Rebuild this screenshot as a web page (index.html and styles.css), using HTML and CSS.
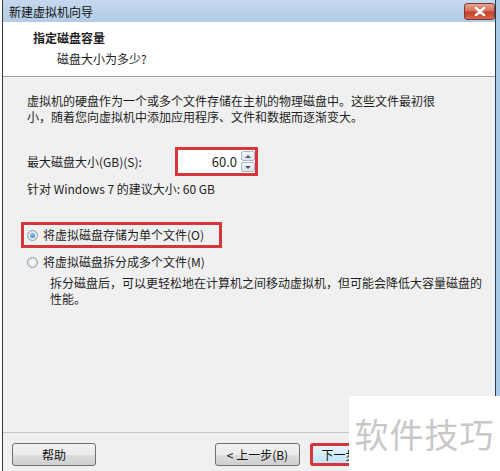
FILE: index.html
```html
<!DOCTYPE html>
<html>
<head>
    <title>新建虚拟机向导</title>
    <link rel="stylesheet" href="styles.css">
</head>
<body>
    <div class="window">
        <div class="titlebar">
            <span class="title">新建虚拟机向导</span>
            <button class="close-btn">
                <svg width="12" height="9" viewBox="0 0 12 9">
                    <path d="M2 1 L10 8 M10 1 L2 8" stroke="#fff" stroke-width="2.4" stroke-linecap="round"/>
                </svg>
            </button>
        </div>
        <div class="header">
            <div class="header-title">指定磁盘容量</div>
            <div class="header-sub">磁盘大小为多少?</div>
        </div>
        <div class="content">
            <p class="intro">虚拟机的硬盘作为一个或多个文件存储在主机的物理磁盘中。这些文件最初很<br>小，随着您向虚拟机中添加应用程序、文件和数据而逐渐变大。</p>
            <div class="size-row">
                <label class="size-label">最大磁盘大小(GB)(S):</label>
                <div class="highlight spin-wrap">
                    <div class="spin">
                        <span class="spin-value">60.0</span>
                        <div class="spin-arrows">
                            <span class="arrow up"></span>
                            <span class="arrow down"></span>
                        </div>
                    </div>
                </div>
            </div>
            <p class="hint">针对 Windows 7 的建议大小: 60 GB</p>
            <div class="options">
                <div class="highlight option-box">
                    <label class="option"><span class="radio checked"></span>将虚拟磁盘存储为单个文件(O)</label>
                </div>
                <label class="option plain"><span class="radio"></span>将虚拟磁盘拆分成多个文件(M)</label>
                <p class="option-desc">拆分磁盘后，可以更轻松地在计算机之间移动虚拟机，但可能会降低大容量磁盘的<br>性能。</p>
            </div>
        </div>
        <div class="footer">
            <button class="btn help">帮助</button>
            <div class="nav">
                <button class="btn">&lt; 上一步(B)</button>
                <button class="btn next">下一步(N) &gt;</button>
                <button class="btn">取消</button>
            </div>
        </div>
    </div>
    <div class="watermark">软件技巧</div>
</body>
</html>
```

FILE: styles.css
```css
/* dialog */
body {
    margin: 0;
    width: 500px;
    height: 471px;
    overflow: hidden;
    background: #fff;
    font-family: "Noto Sans CJK SC", "DejaVu Sans", sans-serif;
    font-size: 12px;
    color: #1e1e1e;
    position: relative;
}

.window {
    margin-left: 2px;
    width: 492px;
    height: 471px;
    border-left: 1px solid #3a3a3a;
    border-right: 1px solid #2c3b4a;
    box-shadow: 4px 0 0 #a8cbe9;
    background: #f0f0f0;
    display: flex;
    flex-direction: column;
}

.titlebar {
    height: 22px;
    background: linear-gradient(#c5d8ee, #b3cbe5);
    display: flex;
    align-items: center;
    justify-content: space-between;
    padding: 0 0 0 6px;
}

.title {
    font-size: 12px;
    color: #111;
}

.close-btn {
    width: 31px;
    height: 17px;
    border: 1px solid #7b3a33;
    border-radius: 3px;
    background: linear-gradient(#e8a493 0%, #d7705a 45%, #c2412a 55%, #d7674d 100%);
    display: flex;
    align-items: center;
    justify-content: center;
    padding: 0;
}

.header {
    height: 55px;
    background: #fff;
    border-bottom: 1px solid #a0a0a0;
    padding: 8px 0 0 30px;
    box-sizing: border-box;
}

.header-title {
    font-weight: bold;
    line-height: 16px;
}

.header-sub {
    padding-left: 24px;
    margin-top: 5px;
    line-height: 16px;
}

.content {
    flex: 1;
    padding: 16px 0 0 24px;
}

.intro {
    margin: 0;
    line-height: 16px;
}

.size-row {
    display: flex;
    align-items: center;
    margin-top: 22px;
}

.size-label {
    width: 148px;
}

.highlight {
    border: 3px solid #d7353c;
}

.spin-wrap {
    width: 77px;
    height: 23px;
}

.spin {
    height: 100%;
    background: #fff;
    display: flex;
    align-items: center;
    justify-content: flex-end;
}

.spin-value {
    font-size: 13px;
    margin-right: 4px;
}

.spin-arrows {
    width: 14px;
    height: 21px;
    display: flex;
    flex-direction: column;
    gap: 1px;
}

.arrow {
    flex: 1;
    border: 1px solid #a9b6c6;
    border-radius: 2px;
    background: linear-gradient(#f4f7fb, #dbe3ec);
    position: relative;
}

.arrow::after {
    content: "";
    position: absolute;
    left: 3px;
    top: 3px;
    border-left: 3px solid transparent;
    border-right: 3px solid transparent;
}

.arrow.up::after {
    border-bottom: 3px solid #4a5b70;
}

.arrow.down::after {
    border-top: 3px solid #4a5b70;
}

.hint {
    margin: 5px 0 0;
    line-height: 16px;
}

.options {
    margin-top: 25px;
}

.option-box {
    width: 192px;
    height: 20px;
    margin-left: -6px;
    display: flex;
    align-items: center;
    padding-left: 3px;
}

.option {
    display: flex;
    align-items: center;
    gap: 5px;
    line-height: 16px;
}

.option.plain {
    margin-top: 6px;
}

.radio {
    width: 11px;
    height: 11px;
    border-radius: 50%;
    border: 1px solid #8f9aa8;
    background: radial-gradient(#fdfdfd, #d6dbe1);
    box-sizing: border-box;
    position: relative;
}

.radio.checked::after {
    content: "";
    position: absolute;
    left: 2px;
    top: 2px;
    width: 5px;
    height: 5px;
    border-radius: 50%;
    background: radial-gradient(circle at 40% 35%, #8ad0f8, #1c6fb8);
}

.option-desc {
    margin: 5px 0 0 23px;
    line-height: 16px;
}

.footer {
    height: 39px;
    border-top: 1px solid #c7c7c7;
    display: flex;
    align-items: flex-start;
    justify-content: space-between;
    padding: 10px 5px 0 9px;
    box-sizing: border-box;
}

.nav {
    display: flex;
    gap: 10px;
}

.btn {
    width: 85px;
    height: 23px;
    font-family: inherit;
    font-size: 12px;
    color: #111;
    border: 1px solid #707070;
    border-radius: 3px;
    background: linear-gradient(#f2f2f2 0%, #ebebeb 50%, #dddddd 51%, #cfcfcf 100%);
    padding: 0;
}

.btn.help {
    width: 84px;
}

.btn.next {
    border: 3px solid #d7353c;
    background: linear-gradient(#e5f4fc, #c4e5f6);
}

.watermark {
    position: absolute;
    left: 349px;
    top: 396px;
    width: 151px;
    height: 75px;
    background: #fff;
    color: #c8c8c8;
    font-size: 34px;
    line-height: 75px;
    text-align: center;
    letter-spacing: 1px;
}
```
